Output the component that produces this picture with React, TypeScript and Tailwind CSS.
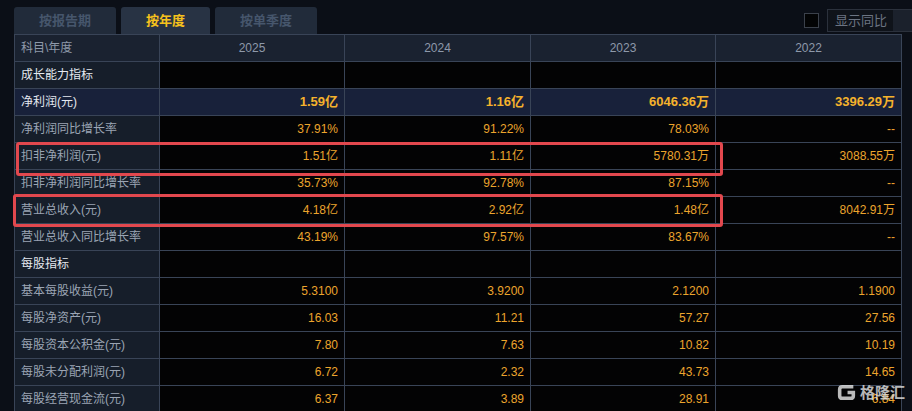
import React from "react";

type Row = {
  label: string;
  values?: string[];
  section?: boolean;
  strong?: boolean;
};

const years = ["2025", "2024", "2023", "2022"];

const rows: Row[] = [
  { label: "成长能力指标", section: true },
  { label: "净利润(元)", values: ["1.59亿", "1.16亿", "6046.36万", "3396.29万"], strong: true },
  { label: "净利润同比增长率", values: ["37.91%", "91.22%", "78.03%", "--"] },
  { label: "扣非净利润(元)", values: ["1.51亿", "1.11亿", "5780.31万", "3088.55万"] },
  { label: "扣非净利润同比增长率", values: ["35.73%", "92.78%", "87.15%", "--"] },
  { label: "营业总收入(元)", values: ["4.18亿", "2.92亿", "1.48亿", "8042.91万"] },
  { label: "营业总收入同比增长率", values: ["43.19%", "97.57%", "83.67%", "--"] },
  { label: "每股指标", section: true },
  { label: "基本每股收益(元)", values: ["5.3100", "3.9200", "2.1200", "1.1900"] },
  { label: "每股净资产(元)", values: ["16.03", "11.21", "57.27", "27.56"] },
  { label: "每股资本公积金(元)", values: ["7.80", "7.63", "10.82", "10.19"] },
  { label: "每股未分配利润(元)", values: ["6.72", "2.32", "43.73", "14.65"] },
  { label: "每股经营现金流(元)", values: ["6.37", "3.89", "28.91", "6.84"] },
];

const tabs = [
  { name: "按报告期", w: "w-[102px]", active: false },
  { name: "按年度", w: "w-[89px]", active: true },
  { name: "按单季度", w: "w-[102px]", active: false },
];

function Tabs() {
  return (
    <div className="flex gap-[5px] pl-[14px] pt-[7px]">
      {tabs.map((t) => (
        <div
          key={t.name}
          className={
            "h-[27px] rounded-t-[3px] flex items-center justify-center text-[13px] font-bold " +
            t.w +
            (t.active ? " bg-[#283344] text-[#f6c21c]" : " bg-[#212b3a] text-[#46566c]")
          }
        >
          {t.name}
        </div>
      ))}
    </div>
  );
}

function CompareToggle() {
  return (
    <div className="flex items-start gap-[8px] pt-[9px] mr-[-10px]">
      <div className="mt-[4px] w-[15px] h-[15px] bg-[#030405] border border-[#3b414b]" />
      <div className="w-[95px] h-[23px] flex border border-[#2b313c] bg-[#0f131a]">
        <span className="w-[65px] pl-[7px] leading-[21px] text-[13px] text-[#6c7482]">显示同比</span>
        <span className="flex-1 bg-[#1b212c]" />
      </div>
    </div>
  );
}

function Watermark() {
  return (
    <div className="absolute left-[836px] top-[382px] flex items-center gap-[3px] opacity-80">
      <svg width="21" height="21" viewBox="0 0 20 20">
        <path
          d="M16.5 4.5 H6 Q3.5 4.5 3.5 7 V13 Q3.5 15.5 6 15.5 H14 Q16.5 15.5 16.5 13 V10 H11"
          fill="none"
          stroke="#e8e8e8"
          strokeWidth="3.4"
        />
      </svg>
      <span className="text-[15px] font-bold text-[#e4e4e4] leading-none">格隆汇</span>
    </div>
  );
}

export default function App() {
  return (
    <div
      className="relative w-[912px] h-[411px] overflow-hidden bg-[#0b0f17]"
      style={{ fontFamily: '"Liberation Sans", "Noto Sans CJK SC", sans-serif' }}
    >
      <div className="flex justify-between h-[34px]">
        <Tabs />
        <CompareToggle />
      </div>

      <div className="relative ml-[14px] w-[888px]">
        <div className="grid grid-cols-[144px_184px_185px_184px_185px] gap-px bg-[#394457] pt-px px-px">
          <div className="h-[26px] bg-[#1a2230] pl-[6px] flex items-center text-[12px] text-[#8e99aa]">
            科目\年度
          </div>
          {years.map((y) => (
            <div
              key={y}
              className="h-[26px] bg-[#1a2230] flex items-center justify-center text-[12px] text-[#8e99aa]"
            >
              {y}
            </div>
          ))}

          {rows.map((r) => (
            <React.Fragment key={r.label}>
              <div
                className={
                  "h-[26px] pl-[6px] flex items-center text-[12px] " +
                  (r.strong ? "bg-[#18213a] " : "bg-[#161e2a] ") +
                  (r.section || r.strong ? "text-[#e4e9f0]" : "text-[#9ba5b4]")
                }
              >
                {r.label}
              </div>
              {(r.values ?? ["", "", "", ""]).map((v, i) => (
                <div
                  key={i}
                  className={
                    "h-[26px] pr-[6px] flex items-center justify-end " +
                    (r.strong
                      ? "bg-[#18213a] text-[13px] font-bold text-[#f5b22c]"
                      : "bg-[#030304] text-[12px] text-[#eca52d]")
                  }
                >
                  {v}
                </div>
              ))}
            </React.Fragment>
          ))}
        </div>

        {/* red annotation boxes drawn over the table */}
        <div className="absolute left-[2px] top-[108px] w-[707px] h-[34px] border-[3px] border-[#e2484e] rounded-[3px]" />
        <div className="absolute left-[-1px] top-[160px] w-[710px] h-[33px] border-[3px] border-[#e2484e] rounded-[3px]" />
      </div>

      <Watermark />
    </div>
  );
}
